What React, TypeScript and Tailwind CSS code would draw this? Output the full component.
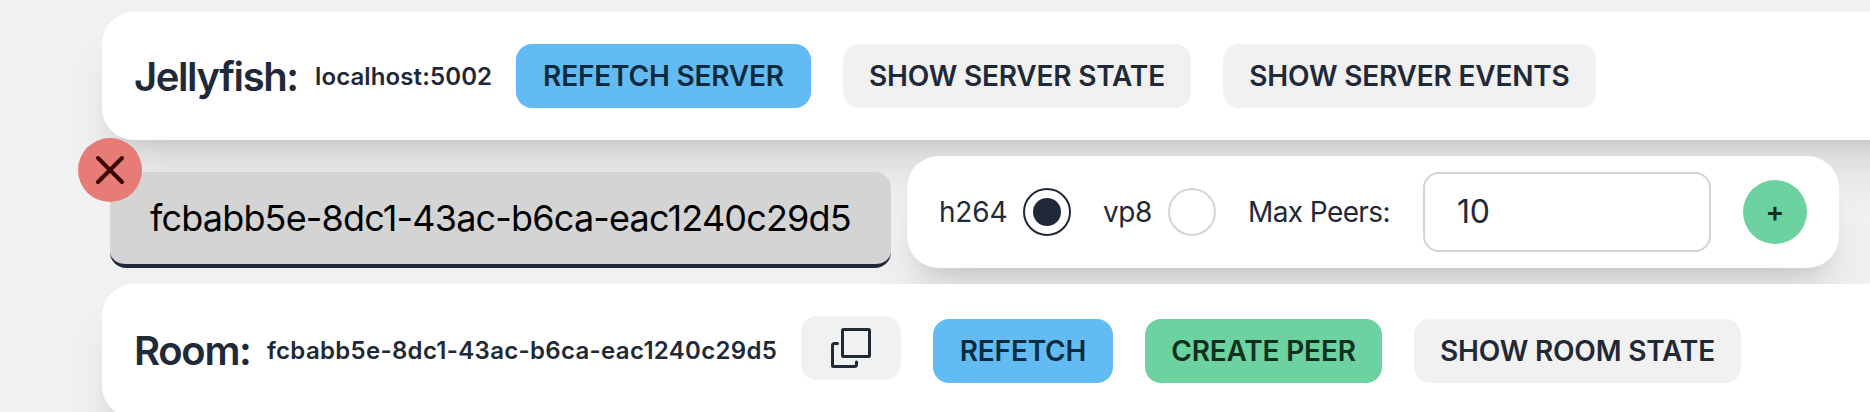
import type { ReactNode } from "react";

const buttonTones = {
  info: "bg-[#62bcf3] text-[#0a2b3d]",
  success: "bg-[#6cd2a0] text-[#12301f]",
  neutral: "bg-[#f1f1f1] text-[#1f2937]",
};

function Button({ tone, width, children }: { tone: keyof typeof buttonTones; width: string; children: ReactNode }) {
  return (
    <button
      className={`flex h-16 shrink-0 items-center justify-center whitespace-nowrap rounded-2xl text-[28px] font-semibold leading-none tracking-[-0.18px] ${buttonTones[tone]} ${width}`}
    >
      {children}
    </button>
  );
}

const cardShadow = "shadow-[0_40px_50px_-10px_rgba(0,0,0,0.1),0_16px_20px_-12px_rgba(0,0,0,0.1)]";

function CopyIcon() {
  return (
    <svg className="size-10" viewBox="0 0 40 40" fill="none" stroke="currentColor" strokeWidth="3" strokeLinecap="round" strokeLinejoin="round">
      <rect x="11.5" y="1.5" width="27" height="27" rx="1" />
      <path d="M6.5 15.5H3.500a2 2 0 0 0-2 2V37.500a1 1 0 0 0 1 1H23.500a2 2 0 0 0 2-2V34" />
    </svg>
  );
}

export default function App() {
  return (
    <div className="h-[412px] w-full overflow-hidden bg-[#f1f1f1] pt-3 font-['Inter',sans-serif] text-[#1f2937]">
      <section className={`ml-[102px] flex h-32 w-[1900px] items-center rounded-[32px] bg-white pl-8 ${cardShadow}`}>
        <h2 className="w-[165px] shrink-0 pt-0.5 text-[40px] font-semibold leading-none tracking-[-1.4px]">Jellyfish:</h2>
        <span className="ml-4 w-[201px] shrink-0 pt-0.5 text-2xl font-semibold leading-none tracking-[0.12px]">localhost:5002</span>
        <div className="flex gap-8">
          <Button tone="info" width="w-[295px]">REFETCH SERVER</Button>
          <Button tone="neutral" width="w-[348px]">SHOW SERVER STATE</Button>
          <Button tone="neutral" width="w-[373px]">SHOW SERVER EVENTS</Button>
        </div>
      </section>

      <div className="mt-4 ml-[110px] flex h-28 gap-4">
        <div className="relative mt-4 flex h-24 w-[781px] shrink-0 items-center whitespace-nowrap rounded-2xl border-b-4 border-[#1f2937] bg-[#d4d4d4] pl-10 text-4xl tracking-[-0.82px] text-black">
          fcbabb5e-8dc1-43ac-b6ca-eac1240c29d5
          <button className="absolute -left-8 -top-[34px] flex size-16 items-center justify-center rounded-full bg-[#e77b76] text-[#3d0202]">
            <svg className="size-12" viewBox="0 0 24 24" fill="none" stroke="currentColor" strokeWidth="2" strokeLinecap="round">
              <path d="M6 18L18 6M6 6l12 12" />
            </svg>
          </button>
        </div>

        <section className={`relative flex w-[932px] shrink-0 items-start rounded-[32px] bg-white pl-8 pt-4 ${cardShadow}`}>
          <label className="flex h-20 w-[138px] items-center text-[28px]">
            <span className="w-[84px] shrink-0 tracking-[-0.2px]">h264</span>
            <span className="flex size-12 shrink-0 items-center justify-center rounded-full border-2 border-[#1f2937]">
              <span className="size-7 rounded-full bg-[#1f2937]" />
            </span>
          </label>
          <label className="ml-[26px] flex h-20 w-[145px] items-center text-[28px]">
            <span className="w-[65px] shrink-0 tracking-[-0.4px]">vp8</span>
            <span className="size-12 shrink-0 rounded-full border-2 border-[#d2d4d7]" />
          </label>
          <span className="flex h-20 w-[175px] items-center text-[28px] tracking-[-0.6px]">Max Peers:</span>
          <span className="flex h-20 w-72 items-center rounded-2xl border-2 border-[#d2d4d7] pl-8 text-[32px] tracking-[-0.2px]">10</span>
          <button className="ml-8 mt-2 flex size-16 items-center justify-center rounded-full bg-[#6cd2a0] text-[28px] font-semibold text-[#12301f]">+</button>
        </section>
      </div>

      <section className={`relative mt-4 ml-[102px] flex h-[134px] w-[1900px] items-center rounded-[32px] bg-white pl-8 ${cardShadow}`}>
        <h2 className="w-[117px] shrink-0 text-[40px] font-semibold leading-none tracking-[-1.3px]">Room:</h2>
        <span className="ml-4 w-[534px] shrink-0 text-2xl font-semibold leading-none tracking-[0.31px]">fcbabb5e-8dc1-43ac-b6ca-eac1240c29d5</span>
        <button className="mb-1.5 flex h-16 w-[100px] shrink-0 items-center justify-center rounded-2xl bg-[#f1f1f1]">
          <CopyIcon />
        </button>
        <div className="ml-8 flex gap-8">
          <Button tone="info" width="w-[180px]">REFETCH</Button>
          <Button tone="success" width="w-[237px]">CREATE PEER</Button>
          <Button tone="neutral" width="w-[327px]">SHOW ROOM STATE</Button>
        </div>
      </section>
    </div>
  );
}
